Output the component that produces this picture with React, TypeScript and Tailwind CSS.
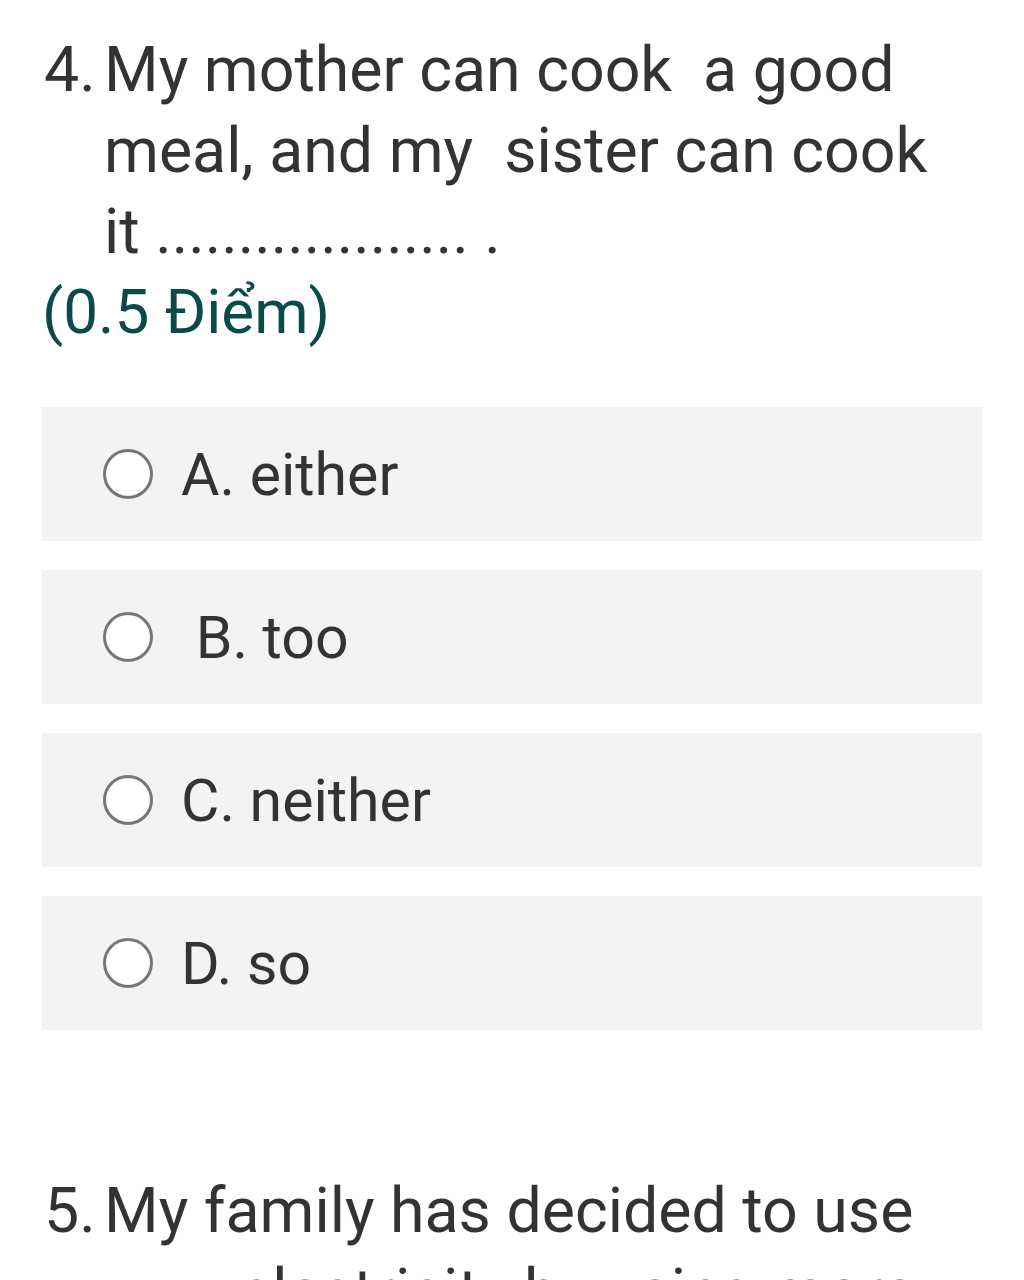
import React from 'react';

const options = ['A. either', ' B. too', 'C. neither', 'D. so'];

const Radio = () => (
  <span className="block h-[50px] w-[50px] shrink-0 rounded-full border-[3px] border-[#777777] bg-white" />
);

export default function App() {
  return (
    <div className="min-h-[1280px] bg-white font-['Roboto',sans-serif] text-[#333333]">
      <div className="px-[42px] pt-[29px]">
        <div className="flex text-[62.6px] leading-[81px]">
          <span className="w-[62px] shrink-0 pl-[2px]">4.</span>
          <div className="whitespace-pre">
            <div>My mother can cook  a good</div>
            <div>meal, and my  sister can cook</div>
            <div>it ................... .</div>
          </div>
        </div>
        <div className="mt-[0px] text-[62px] leading-[80px] text-[#0a4a48]">(0.5 Điểm)</div>

        <div className="mt-[55px] flex flex-col gap-[29px]">
          {options.map((o) => (
            <div key={o} className="flex h-[134px] items-center bg-[#f3f3f3] pl-[61px]">
              <Radio />
              <span className="ml-[28px] whitespace-pre text-[59px] leading-none">{o}</span>
            </div>
          ))}
        </div>

        <div className="mt-[140px] flex text-[62.6px] leading-[81px]">
          <span className="w-[62px] shrink-0 pl-[2px]">5.</span>
          <div className="whitespace-pre">
            <div>My family has decided to use</div>
            <div className="pl-[135px]">electricity by using more</div>
          </div>
        </div>
      </div>
    </div>
  );
}
